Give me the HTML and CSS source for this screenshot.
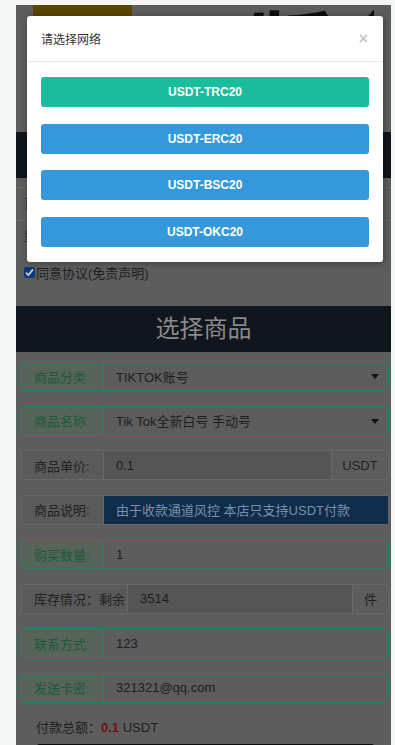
FILE: index.html
```html
<!DOCTYPE html>
<html lang="zh-CN">
<head>
<meta charset="utf-8">
<title>选择商品</title>
<link rel="stylesheet" href="styles.css">
</head>
<body>
<div class="page">
  <header class="banner">
    <div class="banner-logo"></div>
    <div class="banner-text">田版会</div>
  </header>
  <nav class="topbar"></nav>
  <ul class="notice">
    <li>百</li>
    <li>型</li>
  </ul>
  <label class="agree"><span class="check"><svg viewBox="0 0 12 12" width="11" height="11"><path d="M2.2 6.2 L4.8 8.8 L9.8 2.6" fill="none" stroke="#c9c9c9" stroke-width="2"/></svg></span>同意协议(免责声明)</label>

  <h2 class="section-title">选择商品</h2>

  <div class="order">
    <div class="row ok"><span class="lab">商品分类:</span><span class="val">TIKTOK账号</span><span class="caret"></span></div>
    <div class="row ok"><span class="lab">商品名称:</span><span class="val">Tik Tok全新白号 手动号</span><span class="caret"></span></div>
    <div class="row plain"><span class="lab">商品单价:</span><span class="val ro">0.1</span><span class="addon">USDT</span></div>
    <div class="row plain"><span class="lab">商品说明:</span><span class="val info">由于收款通道风控 本店只支持USDT付款</span></div>
    <div class="row ok"><span class="lab">购买数量:</span><span class="val">1</span></div>
    <div class="row plain"><span class="lab wide">库存情况：剩余</span><span class="val ro">3514</span><span class="addon small">件</span></div>
    <div class="row ok"><span class="lab">联系方式:</span><span class="val">123</span></div>
    <div class="row ok"><span class="lab">发送卡密:</span><span class="val">321321@qq.com</span></div>
  </div>

  <p class="total">付款总额：<b>0.1</b> USDT</p>
  <div class="pay"></div>

  <div class="modal">
    <div class="modal-head">
      <span class="modal-title">请选择网络</span>
      <span class="modal-close">×</span>
    </div>
    <div class="modal-body">
      <button class="net trc">USDT-TRC20</button>
      <button class="net">USDT-ERC20</button>
      <button class="net">USDT-BSC20</button>
      <button class="net">USDT-OKC20</button>
    </div>
  </div>
</div>
</body>
</html>
```

FILE: styles.css
```css
html, body {
  margin: 0;
  padding: 0;
  overflow: hidden;
  height: 745px;
}
body {
  background: #f5f6f6;
  font-family: "Liberation Sans", "Noto Sans CJK SC", sans-serif;
  font-size: 13px;
  color: #222;
}
.page {
  position: relative;
  margin: 5px 0 0 16px;
  width: 375px;
  min-height: 800px;
  background: #5d5d5d;
}
.banner {
  position: relative;
  height: 127px;
  overflow: hidden;
}
.banner-logo {
  position: absolute;
  left: 17px;
  top: 0;
  width: 99px;
  height: 60px;
  background: #5a4500;
}
.banner-text {
  position: absolute;
  left: 146px;
  top: -22px;
  width: 212px;
  overflow: hidden;
  font-size: 88px;
  font-weight: bold;
  color: #0d0d0d;
  letter-spacing: -4px;
  white-space: nowrap;
}
.topbar {
  height: 46px;
  background: #0f151b;
}
.notice {
  list-style: none;
  margin: 0;
  padding: 9px 0 0;
}
.notice li {
  height: 32px;
  line-height: 32px;
  padding-left: 8px;
  border-top: 1px solid #686868;
  color: #2a2a2a;
}
.agree {
  display: flex;
  align-items: center;
  margin: 12px 0 0 8px;
  height: 14px;
  font-size: 13px;
  color: #1f1f1f;
}
.check {
  display: inline-flex;
  align-items: center;
  justify-content: center;
  width: 11px;
  height: 11px;
  margin-right: 1px;
  background: #0b3a77;
  border-radius: 2px;
}
.section-title {
  margin: 27px 0 0;
  height: 46px;
  line-height: 46px;
  background: #0f161d;
  color: #8a8a8a;
  font-size: 24px;
  font-weight: normal;
  text-align: center;
}
.order {
  display: flex;
  flex-direction: column;
  gap: 14.57px;
  margin: 9px 2px 0 5px;
}
.row {
  display: flex;
  height: 30px;
  border: 1px solid #686868;
  border-radius: 3px;
  box-sizing: border-box;
  align-items: stretch;
  position: relative;
}
.row.ok {
  border-color: #2a8069;
}
.lab {
  width: 82px;
  flex: none;
  display: flex;
  align-items: center;
  padding-left: 12px;
  box-sizing: border-box;
  border-right: 1px solid #686868;
  background: #5a5a5a;
  color: #222;
}
.row.ok .lab {
  background: #56645a;
  color: #1d5b3c;
  border-right-color: #2a8069;
}
.lab.wide {
  width: 106px;
}
.val {
  flex: 1;
  display: flex;
  align-items: center;
  padding-left: 12px;
  color: #1e1e1e;
  white-space: nowrap;
  overflow: hidden;
}
.val.ro {
  background: #555555;
}
.val.info {
  background: #0f2d4b;
  color: #7a90a8;
}
.addon {
  width: 56px;
  flex: none;
  display: flex;
  align-items: center;
  justify-content: center;
  border-left: 1px solid #686868;
  color: #222;
}
.addon.small {
  width: 35px;
}
.caret {
  position: absolute;
  right: 9px;
  top: 12px;
  width: 0;
  height: 0;
  border-left: 4px solid transparent;
  border-right: 4px solid transparent;
  border-top: 5px solid #111;
}
.total {
  margin: 14px 0 0 20px;
  line-height: 22px;
  color: #1e1e1e;
}
.total b {
  color: #7a0c0c;
}
.pay {
  margin: 5px 16px 0 20px;
  height: 40px;
  background: #0b0b0b;
  border-radius: 4px;
}
.modal {
  position: absolute;
  left: 11px;
  top: 11px;
  width: 356px;
  background: #fff;
  border-radius: 3px;
  box-shadow: 1px 1px 6px rgba(0, 0, 0, 0.35);
}
.modal-head {
  display: flex;
  justify-content: space-between;
  align-items: center;
  height: 45px;
  padding: 0 15px 0 14px;
  border-bottom: 1px solid #e5e5e5;
}
.modal-title {
  font-size: 12px;
  color: #333;
}
.modal-close {
  font-size: 16px;
  font-weight: bold;
  color: #c6c6c6;
}
.modal-body {
  display: flex;
  flex-direction: column;
  gap: 16.5px;
  padding: 15px 14px 15px 14px;
}
.net {
  display: block;
  width: 100%;
  height: 30px;
  border: 0;
  border-radius: 3px;
  background: #3498db;
  color: #fff;
  font-family: "Liberation Sans", sans-serif;
  font-size: 12px;
  font-weight: bold;
  padding: 0;
}
.net.trc {
  background: #1abc9c;
}
```
